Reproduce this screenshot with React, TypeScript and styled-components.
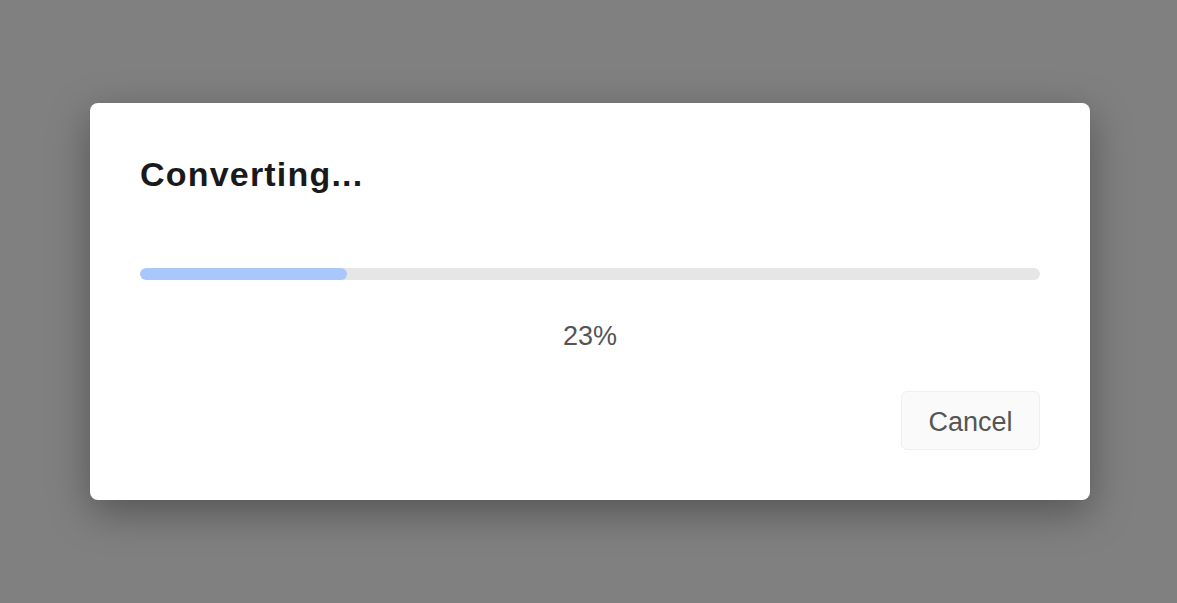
import React from "react";
import styled, { createGlobalStyle } from "styled-components";

const GlobalStyle = createGlobalStyle`
  html, body {
    margin: 0;
    padding: 0;
    background: #808080;
    font-family: "Liberation Sans", Arial, sans-serif;
  }
`;

export default function App() {
  const progress = 23;

  return (
    <>
      <GlobalStyle />
      <Overlay>
        <Dialog>
          <Title>Converting...</Title>
          <Track>
            <Fill style={{ width: `${progress}%` }} />
          </Track>
          <Percent>{progress}%</Percent>
          <Footer>
            <CancelButton>Cancel</CancelButton>
          </Footer>
        </Dialog>
      </Overlay>
    </>
  );
}

const Overlay = styled.div`
  width: 1177px;
  height: 603px;
  display: flex;
  justify-content: center;
  padding-top: 103px;
  box-sizing: border-box;
`;

const Dialog = styled.div`
  width: 1000px;
  height: 397px;
  box-sizing: border-box;
  margin-left: 3px;
  padding: 48px 50px 0;
  background: #fff;
  border-radius: 8px;
  box-shadow: 0 12px 40px rgba(0, 0, 0, 0.35);
  display: flex;
  flex-direction: column;
`;

const Title = styled.h2`
  margin: 0;
  font-size: 34px;
  font-weight: 700;
  line-height: 46px;
  letter-spacing: 1.2px;
  color: #1a1a1a;
`;

const Track = styled.div`
  margin-top: 71px;
  height: 12px;
  border-radius: 6px;
  background: #e6e6e6;
  overflow: hidden;
`;

const Fill = styled.div`
  height: 100%;
  background: #a8c7fa;
  border-radius: 6px;
`;

const Percent = styled.div`
  margin-top: 40px;
  text-align: center;
  font-size: 27px;
  line-height: 32px;
  color: #555;
`;

const Footer = styled.div`
  margin-top: 39px;
  display: flex;
  justify-content: flex-end;
`;

const CancelButton = styled.button`
  width: 139px;
  height: 59px;
  padding: 3px 0 0;
  border: 1px solid #efefef;
  border-radius: 6px;
  background: #fafafa;
  font-family: inherit;
  font-size: 27px;
  color: #555;
  cursor: pointer;
`;
